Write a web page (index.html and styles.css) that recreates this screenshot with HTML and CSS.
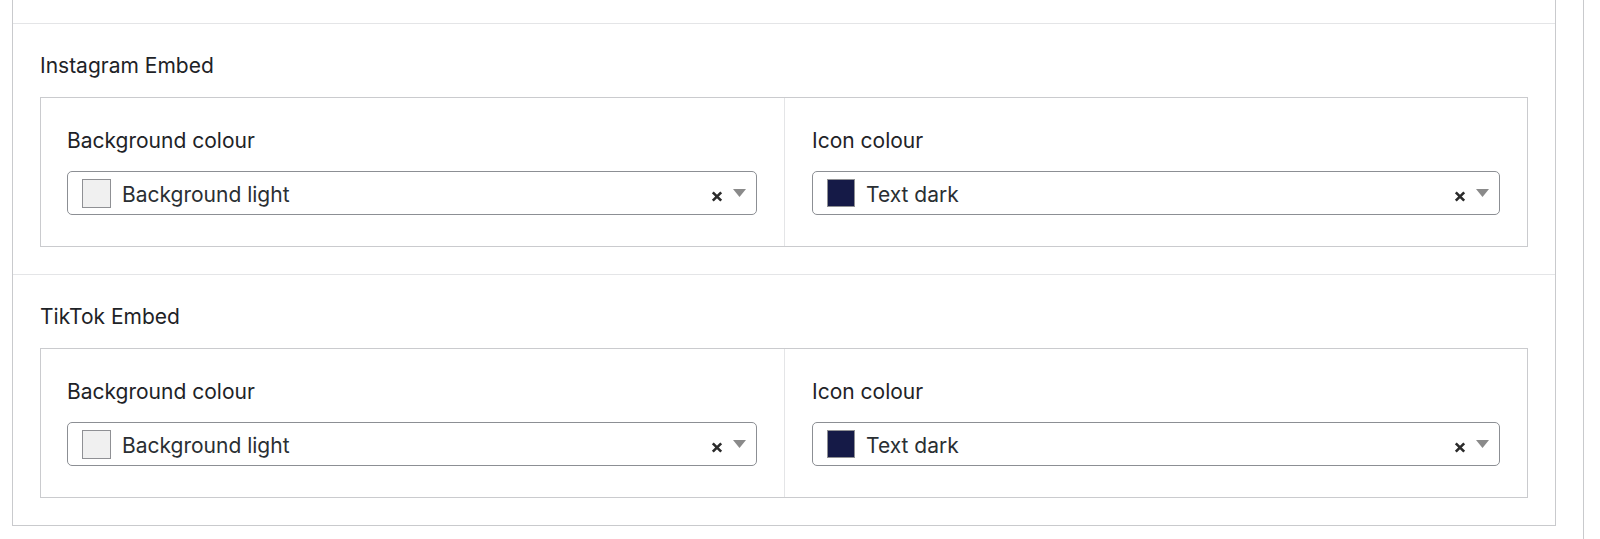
FILE: index.html
```html
<!DOCTYPE html>
<html lang="en">
<head>
<meta charset="utf-8">
<title>Embed settings</title>
<link rel="stylesheet" href="styles.css">
</head>
<body>
<div class="page">
  <div class="panel">
    <div class="section-prev"></div>

    <div class="section">
      <div class="section-title">Instagram Embed</div>
      <div class="box">
        <div class="col col-first">
          <div class="label">Background colour</div>
          <div class="select">
            <span class="swatch swatch-light"></span>
            <span class="value">Background light</span>
            <span class="clear"><svg width="12" height="11" viewBox="0 0 12 11"><path d="M1.8 1.3 L10.2 9.7 M10.2 1.3 L1.8 9.7" stroke="#2b2b2b" stroke-width="2.6" stroke-linecap="butt"/></svg></span>
            <span class="arrow"><svg width="13" height="8" viewBox="0 0 13 8"><path d="M0 0 H13 L6.5 8 Z" fill="#8a8a8a"/></svg></span>
          </div>
        </div>
        <div class="col">
          <div class="label">Icon colour</div>
          <div class="select">
            <span class="swatch swatch-dark"></span>
            <span class="value">Text dark</span>
            <span class="clear"><svg width="12" height="11" viewBox="0 0 12 11"><path d="M1.8 1.3 L10.2 9.7 M10.2 1.3 L1.8 9.7" stroke="#2b2b2b" stroke-width="2.6" stroke-linecap="butt"/></svg></span>
            <span class="arrow"><svg width="13" height="8" viewBox="0 0 13 8"><path d="M0 0 H13 L6.5 8 Z" fill="#8a8a8a"/></svg></span>
          </div>
        </div>
      </div>
    </div>

    <div class="section section-last">
      <div class="section-title">TikTok Embed</div>
      <div class="box">
        <div class="col col-first">
          <div class="label">Background colour</div>
          <div class="select">
            <span class="swatch swatch-light"></span>
            <span class="value">Background light</span>
            <span class="clear"><svg width="12" height="11" viewBox="0 0 12 11"><path d="M1.8 1.3 L10.2 9.7 M10.2 1.3 L1.8 9.7" stroke="#2b2b2b" stroke-width="2.6" stroke-linecap="butt"/></svg></span>
            <span class="arrow"><svg width="13" height="8" viewBox="0 0 13 8"><path d="M0 0 H13 L6.5 8 Z" fill="#8a8a8a"/></svg></span>
          </div>
        </div>
        <div class="col">
          <div class="label">Icon colour</div>
          <div class="select">
            <span class="swatch swatch-dark"></span>
            <span class="value">Text dark</span>
            <span class="clear"><svg width="12" height="11" viewBox="0 0 12 11"><path d="M1.8 1.3 L10.2 9.7 M10.2 1.3 L1.8 9.7" stroke="#2b2b2b" stroke-width="2.6" stroke-linecap="butt"/></svg></span>
            <span class="arrow"><svg width="13" height="8" viewBox="0 0 13 8"><path d="M0 0 H13 L6.5 8 Z" fill="#8a8a8a"/></svg></span>
          </div>
        </div>
      </div>
    </div>
  </div>
  <div class="side"></div>
</div>
</body>
</html>
```

FILE: styles.css
```css
html, body {
  margin: 0;
  padding: 0;
  background: #ffffff;
}

body {
  font-family: Inter, "Noto Sans", "Liberation Sans", sans-serif;
  font-size: 21px;
  color: #1e2327;
}

.page {
  display: flex;
  height: 539px;
  overflow: hidden;
}

.panel {
  margin-left: 12px;
  width: 1544px;
  box-sizing: border-box;
  border: 1px solid #c9cacd;
  border-top: none;
  align-self: flex-start;
  flex: none;
}

.side {
  margin-left: 27px;
  flex: 1;
  border-left: 1px solid #c9cacd;
}

.section-prev {
  height: 23px;
  border-bottom: 1px solid #e4e5e7;
}

.section {
  padding: 28px 27px 27px;
  border-bottom: 1px solid #e4e5e7;
}

.section-last {
  border-bottom: none;
}

.section-title {
  line-height: 28px;
  margin-bottom: 17px;
  color: #1e2327;
}

.box {
  display: grid;
  grid-template-columns: 744px 1fr;
  border: 1px solid #cacbce;
  height: 150px;
  box-sizing: border-box;
}

.col {
  padding: 29px 27px 0 27px;
}

.col-first {
  padding-left: 26px;
  border-right: 1px solid #e4e5e7;
}

.label {
  line-height: 28px;
  margin-bottom: 16px;
  color: #1e2327;
}

.select {
  height: 44px;
  box-sizing: border-box;
  border: 1px solid #8c8f94;
  border-radius: 5px;
  display: flex;
  align-items: center;
  padding: 0 10px 0 14px;
}

.swatch {
  width: 29px;
  height: 29px;
  box-sizing: border-box;
  border: 1px solid #8f9094;
  flex: none;
}

.swatch-light {
  background: #f0f0f0;
}

.swatch-dark {
  width: 28px;
  height: 28px;
  background: #151a47;
}

.value {
  margin-left: 11px;
  margin-top: 4px;
  flex: 1;
  color: #2a2f33;
  line-height: 28px;
}

.clear {
  display: flex;
  margin-top: 6px;
  margin-right: 10px;
}

.arrow {
  display: flex;
  margin-top: -1px;
}
```
